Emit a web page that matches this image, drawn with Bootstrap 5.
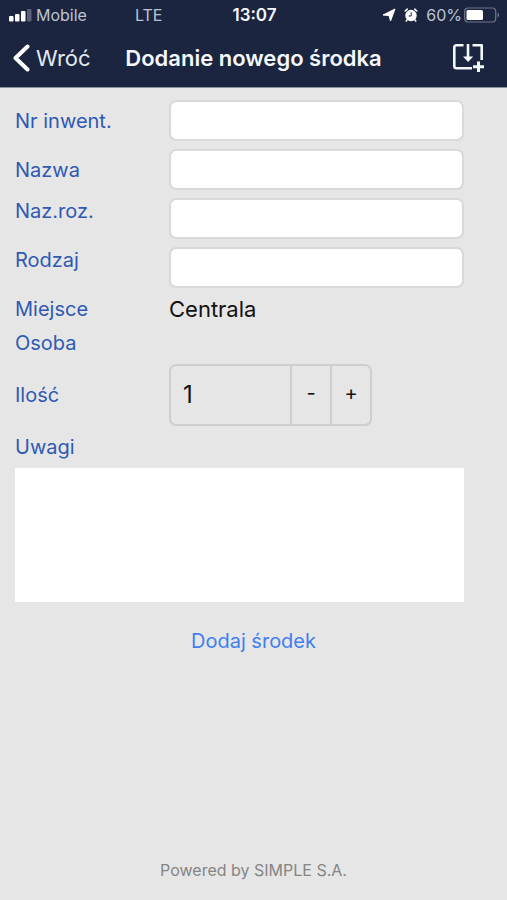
<!DOCTYPE html>
<html lang="pl">
<head>
<meta charset="utf-8">
<meta name="viewport" content="width=device-width, initial-scale=1">
<title>Dodanie nowego środka</title>
<link href="https://cdn.jsdelivr.net/npm/bootstrap@5.3.0/dist/css/bootstrap.min.css" rel="stylesheet">
<style>
  body { font-family: Inter, "Liberation Sans", sans-serif; background: #e6e6e6; color: #111; }
  svg { display: block; flex: none; }
  .app-header { background: #1b2540; color: #f4f7fb; border-bottom: 1px solid #8c92a0; }
  .status-bar { display: grid; grid-template-columns: 1fr auto 1fr; height: 30px; padding: 0 7px 0 9px; font-size: 16px; line-height: 30px; color: #bcc4d3; }
  .network { margin-left: 48px; }
  .clock { color: #f4f7fb; font-size: 17px; font-weight: 600; }
  .percent { margin: 0 2px 0 8px; }
  .title-bar { display: grid; grid-template-columns: 1fr auto 1fr; align-items: center; height: 57px; padding: 0 12px 2px; }
  .back-link { color: #e3e9f2; font-size: 22px; line-height: 28px; gap: 6px; }
  .page-title { font-size: 22px; line-height: 28px; font-weight: 600; }
  .import-btn { margin-right: 10px; }
  .asset-form { padding: 12px 43px 0 15px; }
  .form-stack { gap: 8px; }
  .field-row { display: grid; grid-template-columns: 154px 1fr; align-items: center; }
  .field-label { color: #2f59b3; font-size: 20px; line-height: 26px; }
  .text-field { height: 41px; border: 2px solid #d9d9d9; border-radius: 7px; font-size: 20px; }
  .field-value { font-size: 22px; line-height: 26px; }
  .stepper { width: 203px; height: 62px; border: 2px solid #cecece; border-radius: 7px; }
  .stepper input { min-width: 0; padding: 0 12px; font-size: 24px; color: #111; }
  .stepper button { width: 40px; border: 0; border-left: 2px solid #cecece; border-radius: 0; font-size: 20px; padding: 0 0 4px; color: #111; }
  .notes-field { height: 134px; border: 0; border-radius: 0; resize: none; }
  .submit-btn { color: #4080ee; font-size: 20px; line-height: 28px; padding: 0 12px; border: 0; margin-top: 25px; }
  .app-footer { color: #858585; font-size: 16px; line-height: 20px; padding-bottom: 20px; }
</style>
</head>
<body class="min-vh-100 d-flex flex-column">
<header class="app-header">
  <div class="status-bar">
    <div class="d-flex align-items-center">
      <svg width="23" height="14" viewBox="0 0 23 14" aria-hidden="true"><g fill="#fff"><rect x="0" y="8" width="4.500" height="5.500" rx="1"/><rect x="6" y="6" width="4.500" height="7.500" rx="1"/><rect x="12" y="3" width="4.500" height="10.500" rx="1"/></g><rect x="18" y="1" width="4.500" height="12.500" rx="1" fill="#59617a"/></svg>
      <span class="ms-1">Mobile</span><span class="network">LTE</span>
    </div>
    <span class="clock">13:07</span>
    <div class="d-flex align-items-center justify-content-end">
      <svg width="14" height="14" viewBox="0 0 14 14" aria-hidden="true"><path d="M13 1 8.500 13 7 7.500 1 7Z" fill="#fff" stroke="#fff" stroke-linejoin="round"/></svg>
      <svg class="ms-2" width="14" height="14" viewBox="0 0 14 14" aria-hidden="true"><circle cx="7" cy="7.500" r="5.700" fill="#fff"/><path d="M1.200 3 3.200 1.200M12.800 3 10.800 1.200M3 12l-.7 1M11 12l.7 1" stroke="#fff" stroke-width="1.600" stroke-linecap="round"/><path d="M7.200 4.300V8H4.600" fill="none" stroke="#1b2540" stroke-width="1"/></svg>
      <span class="percent">60%</span>
      <svg width="36" height="16" viewBox="0 0 36 16" aria-hidden="true"><rect x=".7" y="1" width="31" height="14" rx="3.500" fill="none" stroke="#6f778b" stroke-width="1.200"/><rect x="2.500" y="3" width="16.500" height="10" rx="1.500" fill="#fff"/><path d="M33.500 5.500c2 .7 2 4.300 0 5Z" fill="#6f778b"/></svg>
    </div>
  </div>
  <nav class="title-bar" aria-label="Nawigacja">
    <a href="#" class="back-link d-flex align-items-center text-decoration-none">
      <svg width="18" height="30" viewBox="0 0 18 30" aria-hidden="true"><path d="M15.500 3.500 3.500 15l12 11.500" fill="none" stroke="#fff" stroke-width="4" stroke-linecap="round" stroke-linejoin="round"/></svg>
      <span>Wróć</span>
    </a>
    <h1 class="page-title m-0">Dodanie nowego środka</h1>
    <button type="button" class="btn p-0 border-0 ms-auto import-btn" aria-label="Zapisz i dodaj">
      <svg width="33" height="30" viewBox="0 0 33 30" aria-hidden="true"><g fill="none" stroke="#f4f7fb" stroke-width="2.600"><path d="M11.500 2.300H4.500Q2.300 2.300 2.300 4.500V23Q2.300 25.200 4.500 25.200H20M20.500 2.300H29.700V17" stroke-linejoin="round"/><path d="M16 1v14"/><path d="M26.500 18.500v10.500M21 23.800h11" stroke-width="3"/></g><path d="M11 13.500h10.200L16.100 19Z" fill="#f4f7fb"/></svg>
    </button>
  </nav>
</header>
<main class="flex-grow-1">
  <form class="asset-form">
    <div class="form-stack d-flex flex-column">
      <div class="field-row"><label class="field-label" for="inv">Nr inwent.</label><input id="inv" type="text" class="form-control text-field"></div>
      <div class="field-row"><label class="field-label" for="name">Nazwa</label><input id="name" type="text" class="form-control text-field"></div>
      <div class="field-row align-items-start"><label class="field-label" for="ext">Naz.roz.</label><input id="ext" type="text" class="form-control text-field"></div>
      <div class="field-row align-items-start"><label class="field-label" for="kind">Rodzaj</label><input id="kind" type="text" class="form-control text-field"></div>
      <div class="field-row"><span class="field-label">Miejsce</span><span class="field-value">Centrala</span></div>
      <div class="field-row"><span class="field-label">Osoba</span></div>
      <div class="field-row"><label class="field-label" for="qty">Ilość</label>
        <div class="stepper d-flex overflow-hidden">
          <input id="qty" type="text" inputmode="numeric" class="flex-fill border-0 bg-transparent" value="1">
          <button type="button" class="btn flex-shrink-0" aria-label="Mniej">-</button>
          <button type="button" class="btn flex-shrink-0" aria-label="Więcej">+</button>
        </div>
      </div>
      <label class="field-label" for="notes">Uwagi</label>
      <textarea id="notes" class="form-control notes-field"></textarea>
    </div>
  </form>
  <div class="text-center"><button type="button" class="btn submit-btn">Dodaj środek</button></div>
</main>
<footer class="app-footer text-center">Powered by SIMPLE S.A.</footer>
<script src="https://cdn.jsdelivr.net/npm/bootstrap@5.3.0/dist/js/bootstrap.bundle.min.js"></script>
</body>
</html>
